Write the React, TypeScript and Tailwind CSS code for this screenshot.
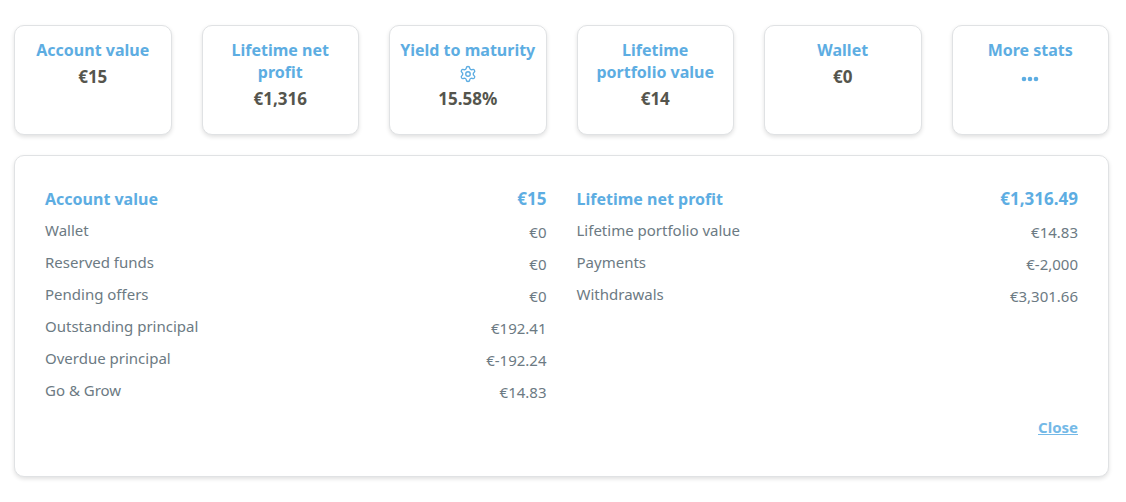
import type { ReactNode } from 'react'
import { Settings } from 'lucide-react'

interface Stat {
  label: string
  value: string
}

const ACCOUNT: Stat[] = [
  { label: 'Wallet', value: '€0' },
  { label: 'Reserved funds', value: '€0' },
  { label: 'Pending offers', value: '€0' },
  { label: 'Outstanding principal', value: '€192.41' },
  { label: 'Overdue principal', value: '€-192.24' },
  { label: 'Go & Grow', value: '€14.83' },
]

const PROFIT: Stat[] = [
  { label: 'Lifetime portfolio value', value: '€14.83' },
  { label: 'Payments', value: '€-2,000' },
  { label: 'Withdrawals', value: '€3,301.66' },
]

function StatCard({ title, value, children }: { title: string; value: string; children?: ReactNode }) {
  return (
    <div className="min-h-[110px] rounded-[10px] border border-[#e0e2e4] bg-white px-2 pt-[13px] text-center shadow-[0_2px_4px_rgba(0,0,0,0.12)]">
      <h2 className="text-base leading-[22px] font-bold text-[#5dade2]">
        {title}
        {children}
      </h2>
      <p className="mt-1 text-[17px] leading-6 font-bold text-[#55554d]">{value}</p>
    </div>
  )
}

function StatTable({ title, total, rows }: { title: string; total: string; rows: Stat[] }) {
  return (
    <table className="w-full self-start text-[15px] text-[#6c7a83]">
      <thead>
        <tr className="h-8 text-[#5dade2]">
          <th scope="col" className="p-0 text-left text-base font-bold">{title}</th>
          <th scope="col" className="p-0 text-right text-[17px] leading-6 font-bold">{total}</th>
        </tr>
      </thead>
      <tbody>
        {rows.map((row) => (
          <tr key={row.label} className="h-8">
            <th scope="row" className="p-0 pb-0.5 text-left font-normal">{row.label}</th>
            <td className="p-0 pt-0.5 text-right">{row.value}</td>
          </tr>
        ))}
      </tbody>
    </table>
  )
}

export default function App() {
  return (
    <main className="bg-white pt-[25px] pr-[17px] pb-6 pl-[14px] font-['Noto_Sans',sans-serif]">
      <section className="grid grid-cols-6 gap-[30px]">
        <StatCard title="Account value" value="€15" />
        <StatCard title="Lifetime net profit" value="€1,316" />
        <StatCard title="Yield to maturity" value="15.58%">
          {' '}
          <button type="button" aria-label="Yield settings" className="inline-flex align-text-bottom">
            <Settings className="size-[18px]" strokeWidth={1.8} />
          </button>
        </StatCard>
        <StatCard title="Lifetime portfolio value" value="€14" />
        <StatCard title="Wallet" value="€0" />
        <button
          type="button"
          className="flex min-h-[110px] flex-col items-center rounded-[10px] border border-[#e0e2e4] bg-white px-2 pt-[13px] text-base leading-[22px] font-bold text-[#5dade2] shadow-[0_2px_4px_rgba(0,0,0,0.12)]"
        >
          More stats
          <svg viewBox="0 0 18 6" className="mt-[15px] h-[6px] w-[18px]" fill="currentColor" aria-hidden="true">
            <circle cx="3" cy="3" r="2.3" />
            <circle cx="9" cy="3" r="2.3" />
            <circle cx="15" cy="3" r="2.3" />
          </svg>
        </button>
      </section>

      <section className="mt-5 rounded-[10px] border border-[#e0e2e4] bg-white px-[30px] pt-[27px] pb-[37px] shadow-[0_2px_4px_rgba(0,0,0,0.12)]">
        <div className="grid grid-cols-2 gap-[30px]">
          <StatTable title="Account value" total="€15" rows={ACCOUNT} />
          <StatTable title="Lifetime net profit" total="€1,316.49" rows={PROFIT} />
        </div>
        <div className="mt-2 flex justify-end">
          <button type="button" className="text-[15px] leading-6 font-bold text-[#74b9e7] underline">
            Close
          </button>
        </div>
      </section>
    </main>
  )
}
